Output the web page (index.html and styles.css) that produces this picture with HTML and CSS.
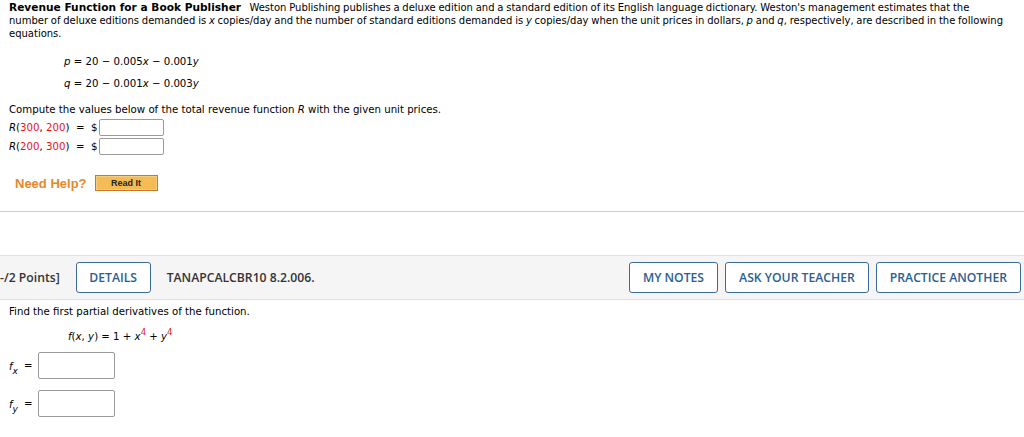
FILE: index.html
```html
<!DOCTYPE html>
<html>
<head>
<meta charset="utf-8">
<link rel="stylesheet" href="styles.css">
</head>
<body>
<div class="q1">
  <p class="intro"><b class="title">Revenue Function for a Book Publisher</b>&nbsp;&nbsp; Weston Publishing publishes a deluxe edition and a standard edition of its English language dictionary. Weston's management estimates that the number of deluxe editions demanded is <i>x</i> copies/day and the number of standard editions demanded is <i>y</i> copies/day when the unit prices in dollars, <i>p</i> and <i>q</i>, respectively, are described in the following equations.</p>
  <div class="eqs">
    <div class="eq"><i>p</i> = 20 &minus; 0.005<i>x</i> &minus; 0.001<i>y</i></div>
    <div class="eq"><i>q</i> = 20 &minus; 0.001<i>x</i> &minus; 0.003<i>y</i></div>
  </div>
  <p class="compute">Compute the values below of the total revenue function <i>R</i> with the given unit prices.</p>
  <div class="rrow"><span class="rlabel"><i>R</i>(<span class="red">300</span>, <span class="red">200</span>) &nbsp;= &nbsp;$</span><span class="box small"></span></div>
  <div class="rrow"><span class="rlabel"><i>R</i>(<span class="red">200</span>, <span class="red">300</span>) &nbsp;= &nbsp;$</span><span class="box small"></span></div>
  <div class="help">
    <span class="need">Need Help?</span>
    <span class="readit">Read It</span>
  </div>
</div>
<div class="bar">
  <span class="points">-/2 Points]</span>
  <span class="btn details">DETAILS</span>
  <span class="code">TANAPCALCBR10 8.2.006.</span>
  <span class="spacer"></span>
  <span class="btn">MY NOTES</span>
  <span class="btn">ASK YOUR TEACHER</span>
  <span class="btn">PRACTICE ANOTHER</span>
</div>
<div class="q2">
  <p class="find">Find the first partial derivatives of the function.</p>
  <div class="func"><i>f</i>(<i>x</i>, <i>y</i>) = 1 + <i>x</i><sup class="red">4</sup> + <i>y</i><sup class="red">4</sup></div>
  <div class="drow"><span class="dlabel"><i>f</i><sub><i>x</i></sub></span><span class="eqsign">=</span><span class="box big"></span></div>
  <div class="drow"><span class="dlabel"><i>f</i><sub><i>y</i></sub></span><span class="eqsign">=</span><span class="box big"></span></div>
</div>
</body>
</html>
```

FILE: styles.css
```css
html, body {
  margin: 0;
  padding: 0;
  background: #fff;
}
body {
  font-family: "DejaVu Sans", Verdana, sans-serif;
  font-size: 10.2px;
  color: #000;
  width: 1024px;
  overflow: hidden;
}
p { margin: 0; }
.red { color: #e8141a; }
.q1 {
  padding: 1px 8px 0 9px;
  border-bottom: 1px solid #cccccc;
  box-sizing: border-box;
  height: 212px;
}
.intro {
  font-size: 10px;
  word-spacing: -0.4px;
  line-height: 13px;
  margin-right: 8px;
}
.title {
  font-size: 10.6px;
  word-spacing: 0;
}
.eqs {
  padding-left: 55px;
  margin-top: 11px;
}
.eq {
  line-height: 22px;
}
.compute {
  margin-top: 8px;
  line-height: 14px;
}
.rrow {
  display: flex;
  align-items: center;
  height: 19px;
}
.compute + .rrow {
  margin-top: 1px;
}
.rlabel {
  white-space: nowrap;
  width: 90px;
}
.box {
  display: inline-block;
  border: 1px solid #9a9a9a;
  border-radius: 2px;
  background: #fff;
  box-sizing: border-box;
}
.box.small {
  width: 65px;
  height: 17px;
}
.help {
  display: flex;
  align-items: center;
  margin-top: 19px;
  padding-left: 6px;
}
.need {
  font-family: "Liberation Sans", Arial, sans-serif;
  font-weight: bold;
  font-size: 13px;
  color: #e8872c;
  margin-right: 8px;
}
.readit {
  display: inline-block;
  width: 63px;
  height: 16px;
  box-sizing: border-box;
  border: 1px solid #c9782a;
  box-shadow: inset 0 0 0 1px #f6cf7e;
  background: #f5bc55;
  font-family: "Liberation Sans", Arial, sans-serif;
  font-weight: bold;
  font-size: 9px;
  line-height: 14px;
  text-align: center;
  color: #222;
}
.bar {
  margin-top: 43px;
  height: 45px;
  box-sizing: border-box;
  background: #f5f5f5;
  border-top: 1px solid #e0e0e0;
  border-bottom: 1px solid #e0e0e0;
  display: flex;
  align-items: center;
  padding-right: 3px;
  font-family: "Open Sans", sans-serif;
  font-weight: 600;
  font-size: 12.2px;
}
.points {
  color: #333;
  margin-left: 0;
  margin-right: 16px;
}
.btn {
  display: inline-flex;
  align-items: center;
  justify-content: center;
  height: 31px;
  box-sizing: border-box;
  padding: 0 13px;
  border: 1px solid #3b6b9a;
  border-radius: 3px;
  background: #fff;
  color: #2b5e8f;
  margin-left: 7px;
}
.btn.details {
  margin-left: 0;
  width: 75px;
  padding: 0;
}
.code {
  color: #333;
  margin-left: 16px;
}
.spacer { flex: 1; }
.q2 {
  padding: 5px 9px 0;
}
.find {
  line-height: 14px;
}
.func {
  margin-top: 11px;
  padding-left: 59px;
  line-height: 14px;
}
.func sup {
  font-size: 8.5px;
  vertical-align: 5px;
  line-height: 0;
}
.drow {
  display: flex;
  align-items: center;
  margin-top: 8px;
  height: 27px;
}
.drow + .drow {
  margin-top: 11px;
}
.dlabel {
  width: 15px;
  position: relative;
  top: 1px;
}
.dlabel sub {
  font-size: 9px;
  vertical-align: -4px;
  line-height: 0;
}
.eqsign {
  width: 14px;
}
.box.big {
  width: 77px;
  height: 27px;
}
```
